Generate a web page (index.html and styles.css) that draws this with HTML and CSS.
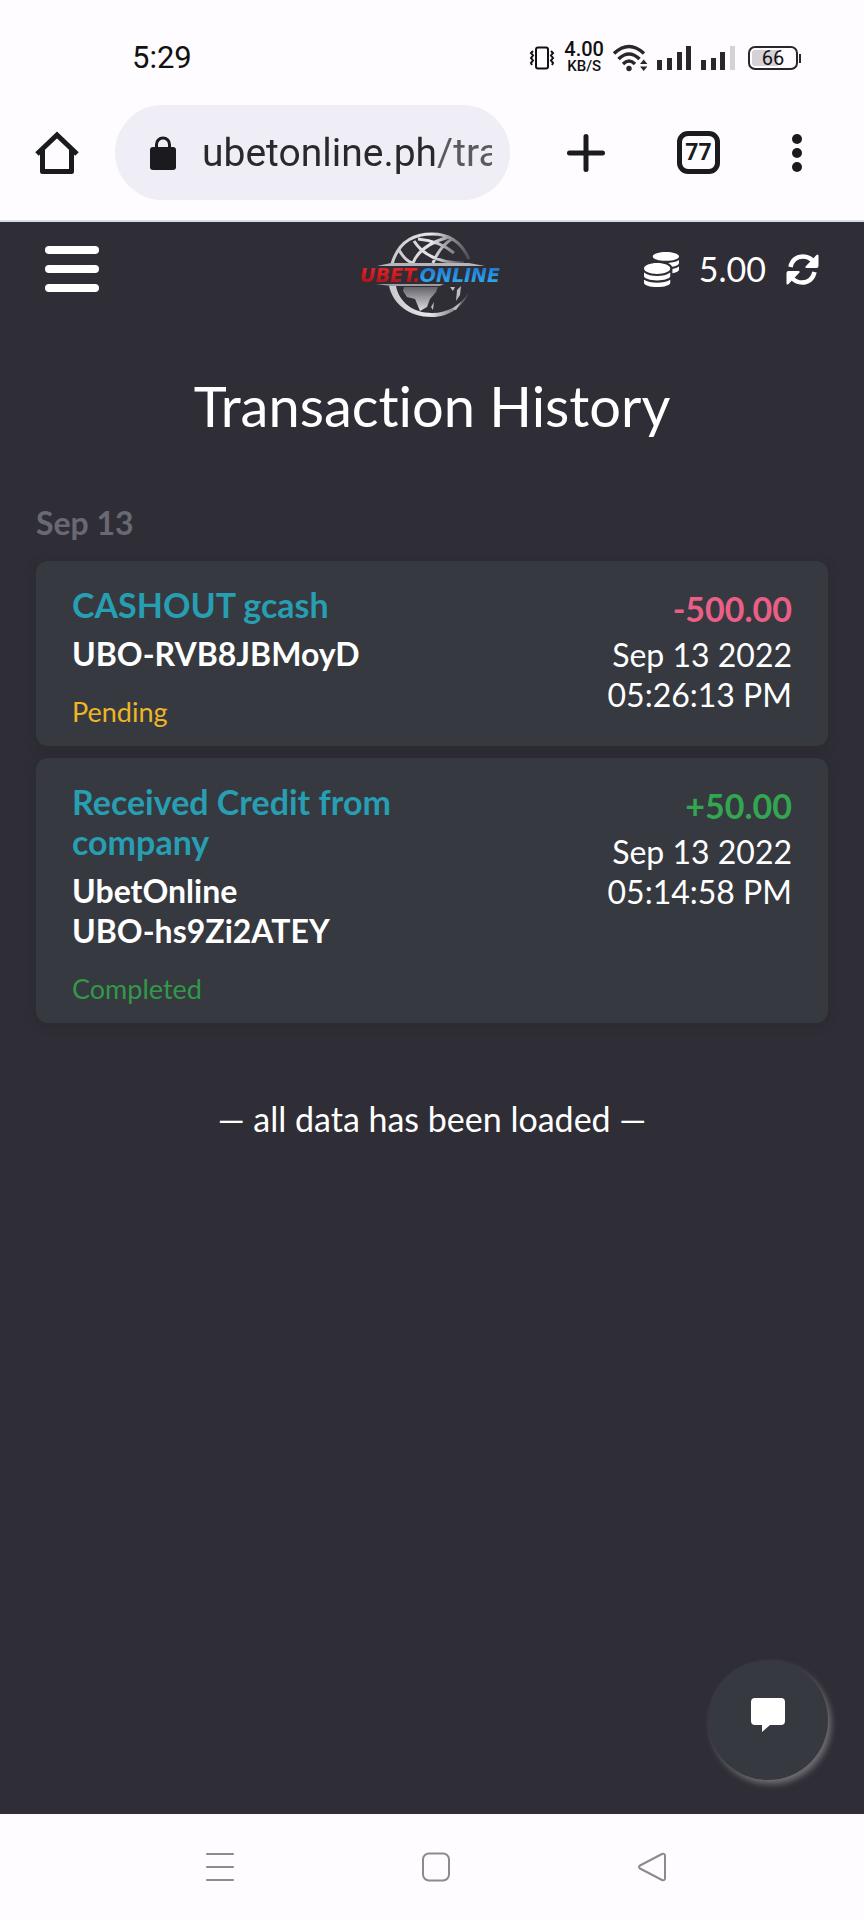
FILE: index.html
```html
<!DOCTYPE html>
<html lang="en">
<head>
    <meta charset="UTF-8">
    <meta name="viewport" content="width=device-width, initial-scale=1.0">
    <title>Transaction History</title>
    <link rel="stylesheet" href="styles.css">
</head>
<body>
    <!-- Phone status bar -->
    <div class="status-bar">
        <span class="clock">5:29</span>
        <div class="status-icons">
            <svg class="icon-vibrate" width="26" height="24" viewBox="0 0 26 24" fill="none" stroke="#111" stroke-width="2">
                <rect x="7" y="1.500" width="12" height="21" rx="2"/>
                <path d="M4 5l-2 2 2 2.500-2 2.500 2 2.500-2 2.500 1 2M22 5l2 2-2 2.500 2 2.500-2 2.500 2 2.500-1 2"/>
            </svg>
            <div class="net-speed">
                <span class="net-value">4.00</span>
                <span class="net-unit">KB/S</span>
            </div>
            <svg class="icon-wifi" width="35" height="28" viewBox="0 0 35 28" fill="none" stroke="#29272c" stroke-width="3.500">
                <path d="M1 9.500Q16 -4.500 31 9.500M5.500 15Q16 5 26.500 15M10 20Q16 14 22 20"/>
                <circle cx="16" cy="24.500" r="2.700" fill="#29272c" stroke="none"/>
                <path d="M27 20l3.700-4.500 3.700 4.500zM27 22.500l3.700 4.500 3.700-4.500z" fill="#29272c" stroke="none"/>
            </svg>
            <svg class="icon-signal" width="35" height="24" viewBox="0 0 35 24" fill="#29272c">
                <rect x="0" y="14" width="5" height="10"/>
                <rect x="10" y="12" width="5" height="12"/>
                <rect x="20" y="6" width="5" height="18"/>
                <rect x="29" y="0" width="5" height="24"/>
            </svg>
            <svg class="icon-signal" width="35" height="24" viewBox="0 0 35 24" fill="#29272c">
                <rect x="0" y="14" width="5" height="10"/>
                <rect x="10" y="12" width="5" height="12"/>
                <rect x="19" y="6" width="5" height="18"/>
                <rect x="29" y="0" width="5" height="24" fill="#d5d1d6"/>
            </svg>
            <div class="battery"><span>66</span></div>
        </div>
    </div>

    <!-- Browser toolbar -->
    <div class="browser-bar">
        <button class="bar-button" aria-label="Home">
            <svg width="44" height="44" viewBox="0 0 44 44" fill="none" stroke="#1b1a1f" stroke-width="5" stroke-linejoin="round">
                <path d="M2 23L22 4l20 19" stroke-linejoin="miter"/>
                <path d="M7.500 18v22.500h29V18"/>
            </svg>
        </button>
        <div class="address">
            <svg width="26" height="34" viewBox="0 0 26 34">
                <rect x="0" y="11" width="26" height="23" rx="3" fill="#1b1a1f"/>
                <path d="M6.500 13V8.500a6.500 6.500 0 0 1 13 0V13" fill="none" stroke="#1b1a1f" stroke-width="3"/>
            </svg>
            <input class="address-input" type="text" value="ubetonline.ph/tra" aria-label="Address">
        </div>
        <div class="bar-actions">
            <button class="bar-button" aria-label="New tab">
                <svg width="38" height="38" viewBox="0 0 38 38" stroke="#1b1a1f" stroke-width="5" stroke-linecap="round">
                    <path d="M19 2.500v33M2.500 19h33"/>
                </svg>
            </button>
            <button class="tab-count">77</button>
            <button class="bar-button" aria-label="More">
                <svg width="10" height="38" viewBox="0 0 10 38" fill="#1b1a1f">
                    <circle cx="5" cy="5" r="5"/>
                    <circle cx="5" cy="19" r="5"/>
                    <circle cx="5" cy="33" r="5"/>
                </svg>
            </button>
        </div>
    </div>

    <div class="page">
        <header class="site-header">
            <button class="menu-button" aria-label="Menu">
                <span></span>
                <span></span>
                <span></span>
            </button>
            <a class="logo" href="#" aria-label="UBET.ONLINE">
                <svg width="148" height="88" viewBox="0 0 148 88">
                    <defs>
                        <linearGradient id="globe" x1="0" y1="0" x2="1" y2="0">
                            <stop offset="0" stop-color="#c9c9cd"/>
                            <stop offset="0.500" stop-color="#e8e8ea"/>
                            <stop offset="1" stop-color="#4d4c54"/>
                        </linearGradient>
                        <linearGradient id="red" x1="0" y1="0" x2="0" y2="1">
                            <stop offset="0" stop-color="#ee2a2c"/>
                            <stop offset="1" stop-color="#a90d14"/>
                        </linearGradient>
                        <linearGradient id="blue" x1="0" y1="0" x2="0" y2="1">
                            <stop offset="0" stop-color="#1c6fd0"/>
                            <stop offset="1" stop-color="#33b3ee"/>
                        </linearGradient>
                        <linearGradient id="land" x1="0" y1="0" x2="0" y2="1">
                            <stop offset="0" stop-color="#65646b"/>
                            <stop offset="1" stop-color="#dededf"/>
                        </linearGradient>
                    </defs>
                    <!-- upper half: grid lines -->
                    <g fill="none" stroke="url(#globe)">
                        <path d="M34 33C40 12 55 3 74 3c17 0 30 9 37 25" stroke-width="3"/>
                        <path d="M41 19Q48 31 55 32Q62 14 91 6M56 10Q70 32 106 32M60 8Q82 10 96 22M75 32Q82 15 94 8" stroke-width="3"/>
                    </g>
                    <path d="M19 35l14-3h78l16 3z" fill="#b5b5ba"/>
                    <!-- lower half: rim and land -->
                    <path d="M31 55C35 73 51 86 74 86c17 0 31-10 37-25C103 74 90 82 74 82 55 82 41 71 38 55z" fill="url(#globe)"/>
                    <path d="M18 53h68l-4 2H33z" fill="#9c9ca1"/>
                    <path d="M46 56h34l-2 5-6 7-3 8-7 4-5-12-8-2-4-6z" fill="url(#land)"/>
                    <path d="M73 76l3-5-1 8zM92 56l3 4 2-4zM99 59l4-4-1 9-4 6zM94 78l9-7-5 8z" fill="#bdbdc1"/>
                    <text class="logo-text" x="2" y="51" fill="url(#red)">UBET.<tspan fill="url(#blue)">ONLINE</tspan></text>
                </svg>
            </a>
            <div class="balance">
                <svg width="35" height="35" viewBox="0 0 512 512" fill="#fff">
                    <path d="M0 405.300V448c0 35.300 86 64 192 64s192-28.700 192-64v-42.700C342.700 434.400 267.200 448 192 448S41.300 434.400 0 405.300zM320 128c106 0 192-28.700 192-64S426 0 320 0 128 28.700 128 64s86 64 192 64zM0 300.400V352c0 35.300 86 64 192 64s192-28.700 192-64v-51.600c-41.300 34-116.900 51.600-192 51.600S41.300 334.400 0 300.400zm416 11c57.300-11.100 96-31.700 96-55.400v-42.700c-23.200 16.400-57.300 27.600-96 34.500v63.600zM192 160C86 160 0 195.800 0 240s86 80 192 80 192-35.800 192-80-86-80-192-80zm219.300 56.300c60-10.800 100.700-32 100.700-56.300v-42.700c-35.500 25.100-96.500 38.600-160.700 41.800 29.500 14.300 51.200 33.500 60 57.200z"/>
                </svg>
                <span class="balance-value">5.00</span>
                <button class="refresh-button" aria-label="Refresh balance">
                    <svg width="33" height="31" viewBox="0 0 33 31" fill="#fff">
                        <path d="M4.500 13C6 6 11 2.500 17 2.500c4 0 7 1.500 9.500 4" fill="none" stroke="#fff" stroke-width="4.500"/>
                        <path d="M30.500 1q2-1.500 2 1v10q0 2-2 2H21q-3 0-1-2z"/>
                        <path d="M28.500 18C27 25 22 28.500 16 28.500c-4 0-7-1.500-9.500-4" fill="none" stroke="#fff" stroke-width="4.500"/>
                        <path d="M2.500 30q-2 1.500-2-1V19q0-2 2-2H12q3 0 1 2z"/>
                    </svg>
                </button>
            </div>
        </header>

        <main class="content">
            <h1>Transaction History</h1>

            <h2 class="day">Sep 13</h2>
            <div class="transactions">
                <div class="card">
                    <div class="details">
                        <div class="card-title">CASHOUT gcash</div>
                        <div class="reference">UBO-RVB8JBMoyD</div>
                        <div class="state pending">Pending</div>
                    </div>
                    <div class="summary">
                        <div class="amount minus">-500.00</div>
                        <div>Sep 13 2022</div>
                        <div>05:26:13 PM</div>
                    </div>
                </div>
                <div class="card">
                    <div class="details">
                        <div class="card-title">Received Credit from company</div>
                        <div class="reference">UbetOnline<br>UBO-hs9Zi2ATEY</div>
                        <div class="state completed">Completed</div>
                    </div>
                    <div class="summary">
                        <div class="amount plus">+50.00</div>
                        <div>Sep 13 2022</div>
                        <div>05:14:58 PM</div>
                    </div>
                </div>
            </div>

            <p class="end-note">— all data has been loaded —</p>
        </main>

        <button class="chat-button" aria-label="Chat">
            <svg width="34" height="34" viewBox="0 0 34 34" fill="#fff">
                <path d="M4 0h26a4 4 0 0 1 4 4v19a4 4 0 0 1-4 4H19l-8 7v-7H4a4 4 0 0 1-4-4V4a4 4 0 0 1 4-4z"/>
            </svg>
        </button>
    </div>

    <!-- Phone navigation -->
    <nav class="phone-nav">
        <button class="bar-button" aria-label="Recent apps">
            <svg width="30" height="30" viewBox="0 0 30 30" stroke="#8d898e" stroke-width="2" stroke-linecap="round">
                <path d="M2 2h26M2 15h26M2 28h26"/>
            </svg>
        </button>
        <button class="bar-button" aria-label="Home screen">
            <svg width="30" height="30" viewBox="0 0 30 30" fill="none" stroke="#8d898e" stroke-width="2">
                <rect x="2" y="1.500" width="26" height="27" rx="6"/>
            </svg>
        </button>
        <button class="bar-button" aria-label="Back">
            <svg width="30" height="30" viewBox="0 0 30 30" fill="none" stroke="#8d898e" stroke-width="2" stroke-linejoin="round">
                <path d="M3 13.500L25 2q3-1 3 2v22q0 3-3 2L3 16.500q-2-1.500 0-3z"/>
            </svg>
        </button>
    </nav>
</body>
</html>
```
FILE: styles.css
```css
* {
    box-sizing: border-box;
}
body {
    margin: 0;
    min-height: 100vh;
    display: flex;
    flex-direction: column;
    background: #fefcfe;
    font-family: Lato, "Liberation Sans", sans-serif;
    font-size: 32px;
    line-height: 40px;
    font-variant-ligatures: none;
}
button {
    padding: 0;
    border: none;
    background: none;
    font: inherit;
    color: inherit;
    cursor: pointer;
}
svg {
    display: block;
}

/* Status bar */
.status-bar {
    display: flex;
    justify-content: space-between;
    align-items: center;
    padding: 38px 63px 0 132px;
    font-family: Roboto, sans-serif;
    color: #111;
}
.clock {
    font-size: 31px;
}
.status-icons {
    display: flex;
    align-items: center;
    gap: 9px;
}
.net-speed {
    display: flex;
    flex-direction: column;
    align-items: center;
    font-weight: 500;
}
.net-value {
    font-size: 20px;
    line-height: 17px;
}
.net-unit {
    font-size: 15px;
    line-height: 17px;
}
.battery {
    position: relative;
    width: 50px;
    height: 24px;
    margin: 0 3px;
    border: 2px solid #29272c;
    border-radius: 7px;
    background: linear-gradient(90deg, #d5d1d6 60%, #fefcfe 60%);
    box-shadow: inset 0 0 0 2px #fefcfe;
    font-size: 20px;
    line-height: 20px;
    text-align: center;
}
.battery::after {
    content: "";
    position: absolute;
    top: 6px;
    right: -5px;
    width: 2px;
    height: 9px;
    background: #29272c;
}

/* Browser toolbar */
.browser-bar {
    display: flex;
    align-items: center;
    padding: 27px 62px 20px 35px;
    border-bottom: 2px solid #d9dbe6;
    color: #1b1a1f;
}
.address {
    flex: 1;
    display: flex;
    align-items: center;
    gap: 26px;
    min-width: 0;
    height: 95px;
    margin: 0 57px 0 36px;
    padding: 0 18px 0 35px;
    border-radius: 48px;
    background: #efeef6;
}
.address-input {
    flex: 1;
    min-width: 0;
    padding: 0;
    border: none;
    outline: none;
    font-family: Roboto, sans-serif;
    font-size: 39px;
    line-height: 48px;
    color: transparent;
    background: linear-gradient(90deg, #29282d 232px, #5b5a60 232px);
    -webkit-background-clip: text;
    background-clip: text;
}
.bar-actions {
    display: flex;
    align-items: center;
    gap: 72px;
}
.tab-count {
    width: 43px;
    height: 43px;
    border: 5px solid #1b1a1f;
    border-radius: 11px;
    font-family: Roboto, sans-serif;
    font-size: 23px;
    font-weight: 700;
    line-height: 32px;
}

/* Site */
.page {
    flex: 1;
    position: relative;
    background: #2f2d36;
    color: #fff;
}
.site-header {
    display: grid;
    grid-template-columns: 1fr auto 1fr;
    align-items: center;
    padding: 9px 45px 7px;
}
.menu-button {
    display: flex;
    flex-direction: column;
    gap: 11px;
    width: 54px;
    margin-bottom: 12px;
}
.menu-button span {
    height: 8px;
    border-radius: 4px;
    background: #fff;
}
.logo-text {
    font-family: "DejaVu Sans", sans-serif;
    font-size: 19px;
    font-weight: 700;
    font-style: italic;
}
.balance {
    display: flex;
    justify-content: flex-end;
    align-items: center;
    gap: 20px;
    margin-bottom: 12px;
}
.balance-value {
    font-size: 34px;
}
.content {
    padding: 0 36px;
}
h1 {
    margin: 44px 0 0;
    font-size: 56px;
    font-weight: 400;
    line-height: 72px;
    text-align: center;
}
.day {
    margin: 61px 0 18px;
    font-size: 32px;
    font-weight: 700;
    line-height: 40px;
    color: #696973;
}
.transactions {
    display: flex;
    flex-direction: column;
    gap: 12px;
}
.card {
    display: flex;
    justify-content: space-between;
    gap: 24px;
    padding: 24px 36px 18px;
    border-radius: 12px;
    background: #36393f;
    box-shadow: 0 2px 10px rgba(40, 44, 48, 0.8);
}
.details {
    width: 50%;
}
.card-title {
    margin-bottom: 9px;
    font-size: 34px;
    font-weight: 700;
    color: #279eb2;
}
.reference {
    margin-bottom: 22px;
    font-weight: 700;
}
.state {
    font-size: 27px;
    line-height: 32px;
}
.pending {
    color: #eeb526;
}
.completed {
    color: #32984a;
}
.summary {
    padding-top: 4px;
    text-align: right;
}
.amount {
    margin-bottom: 6px;
    font-size: 34px;
    font-weight: 700;
}
.minus {
    color: #ea5f86;
}
.plus {
    color: #32a651;
}
.end-note {
    margin: 76px 0 0;
    font-size: 34px;
    text-align: center;
}
.chat-button {
    position: absolute;
    right: 36px;
    bottom: 34px;
    width: 120px;
    height: 120px;
    display: flex;
    justify-content: center;
    align-items: center;
    padding-bottom: 10px;
    border-radius: 50%;
    background: #36393f;
    box-shadow: 3px 4px 6px #706f74;
}

/* Phone navigation */
.phone-nav {
    display: flex;
    justify-content: space-between;
    align-items: center;
    height: 106px;
    padding: 0 197px 0 205px;
}
```
